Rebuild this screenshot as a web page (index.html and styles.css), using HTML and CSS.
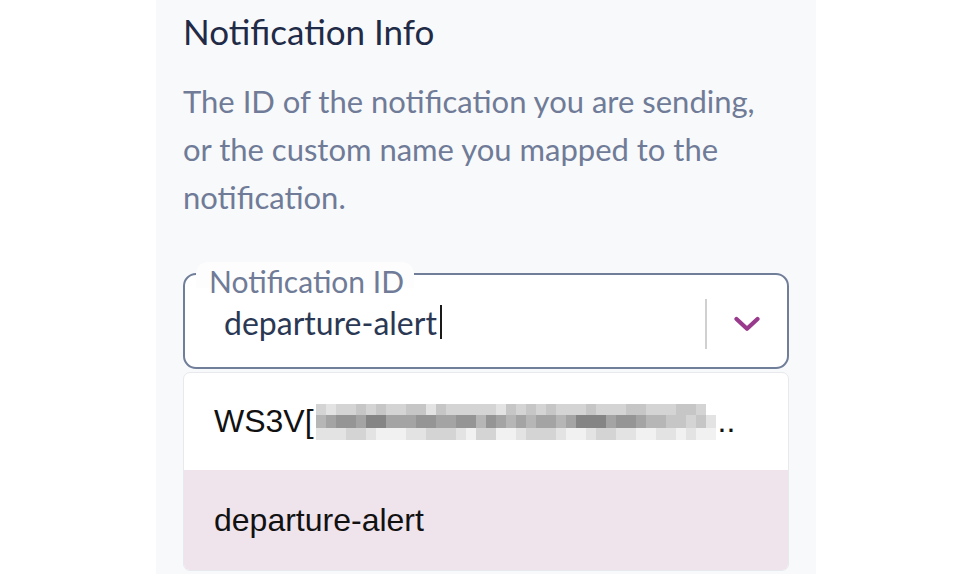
FILE: index.html
```html
<!DOCTYPE html>
<html lang="en">
<head>
<meta charset="utf-8">
<title>Notification Info</title>
<link rel="stylesheet" href="styles.css">
</head>
<body>
<div class="panel">
  <h2 class="title">Notification Info</h2>
  <p class="desc">The ID of the notification you are sending, or the custom name you mapped to the notification.</p>
  <div class="field">
    <span class="label">Notification ID</span>
    <div class="control">
      <div class="value">departure-alert<span class="caret"></span></div>
      <div class="sep"></div>
      <div class="chev">
        <svg width="26" height="16" viewBox="0 0 26 16"><polyline points="2.5,3 13,12.8 23.5,3" fill="none" stroke="#9a3a8c" stroke-width="4.2" stroke-linecap="round" stroke-linejoin="round"/></svg>
      </div>
    </div>
  </div>
  <div class="menu">
    <div class="item">
      <span>WS3V[</span>
      <span class="blur">
        <i class="s3"></i><i class="s2"></i><i class="s3"></i><i class="s3"></i><i class="s4"></i><i class="s3"></i><i class="s4"></i><i class="s3"></i><i class="s3"></i><i class="s4"></i><i class="s4"></i><i class="s2"></i><i class="s4"></i><i class="s3"></i><i class="s3"></i><i class="s3"></i><i class="s3"></i><i class="s3"></i><i class="s2"></i><i class="s4"></i><i class="s3"></i><i class="s4"></i><i class="s3"></i><i class="s4"></i><i class="s3"></i><i class="s3"></i><i class="s3"></i><i class="s4"></i><i class="s3"></i><i class="s3"></i><i class="s3"></i><i class="s4"></i><i class="s4"></i><i class="s3"></i><i class="s3"></i><i class="s3"></i><i class="s4"></i><i class="s4"></i><i class="s3"></i><i class="s0"></i>
        <i class="s5"></i><i class="s6"></i><i class="s7"></i><i class="s7"></i><i class="s6"></i><i class="s8"></i><i class="s8"></i><i class="s6"></i><i class="s6"></i><i class="s6"></i><i class="s7"></i><i class="s7"></i><i class="s6"></i><i class="s6"></i><i class="s7"></i><i class="s7"></i><i class="s5"></i><i class="s7"></i><i class="s6"></i><i class="s5"></i><i class="s6"></i><i class="s5"></i><i class="s6"></i><i class="s6"></i><i class="s5"></i><i class="s6"></i><i class="s8"></i><i class="s8"></i><i class="s8"></i><i class="s6"></i><i class="s7"></i><i class="s7"></i><i class="s6"></i><i class="s5"></i><i class="s5"></i><i class="s4"></i><i class="s4"></i><i class="s3"></i><i class="s4"></i><i class="s2"></i>
        <i class="s2"></i><i class="s2"></i><i class="s2"></i><i class="s3"></i><i class="s3"></i><i class="s2"></i><i class="s1"></i><i class="s1"></i><i class="s1"></i><i class="s2"></i><i class="s2"></i><i class="s3"></i><i class="s3"></i><i class="s3"></i><i class="s2"></i><i class="s1"></i><i class="s3"></i><i class="s3"></i><i class="s1"></i><i class="s1"></i><i class="s2"></i><i class="s3"></i><i class="s3"></i><i class="s3"></i><i class="s2"></i><i class="s1"></i><i class="s1"></i><i class="s2"></i><i class="s3"></i><i class="s3"></i><i class="s2"></i><i class="s2"></i><i class="s1"></i><i class="s1"></i><i class="s2"></i><i class="s2"></i><i class="s1"></i><i class="s2"></i><i class="s1"></i><i class="s1"></i>
      </span>
      <span class="dots">..</span>
    </div>
    <div class="item active">departure-alert</div>
  </div>
</div>
</body>
</html>
```
FILE: styles.css
```css
* { box-sizing: border-box; }
html, body { margin: 0; padding: 0; background: #ffffff; }
body { width: 974px; height: 583px; overflow: hidden; font-family: Lato, "Open Sans", sans-serif; }

.panel {
  margin-left: 156px;
  width: 660px;
  height: 574px;
  background: #f8f9fb;
  padding: 11px 27px 0 27px;
}

.title {
  margin: 0;
  font-size: 35px;
  font-weight: 400;
  line-height: 40px;
  color: #1f2b47;
}

.desc {
  margin: 26px 0 0 0;
  width: 585px;
  font-size: 31px;
  line-height: 48px;
  color: #6f7b97;
}

.field {
  position: relative;
  margin-top: 52px;
  height: 96px;
  border: 2px solid #717e9a;
  border-radius: 13px;
  background: #ffffff;
}

.label {
  position: absolute;
  top: -13px;
  left: 11px;
  padding: 0 10px 0 13px;
  height: 26px;
  line-height: 38px;
  background: #fdfdfe;
  border-radius: 12px 12px 0 0;
  font-size: 30px;
  color: #6f7b97;
  white-space: nowrap;
}

.control {
  display: flex;
  align-items: center;
  height: 100%;
  padding: 0 0 12px 39px;
}

.value {
  flex: 1;
  display: flex;
  align-items: center;
  font-size: 32px;
  color: #2b3854;
  padding-top: 14px;
}

.caret {
  display: inline-block;
  width: 2px;
  height: 34px;
  margin-left: 3px;
  background: #1a1a1a;
}

.sep {
  width: 2px;
  height: 50px;
  margin-top: 18px;
  background: #d0d0d0;
}

.chev {
  width: 80px;
  display: flex;
  justify-content: center;
  padding-top: 18px;
}
.chev svg { display: block; }

.menu {
  margin-top: 3px;
  border: 1px solid #e7e9ed;
  border-radius: 7px;
  background: #ffffff;
  overflow: hidden;
}

.item {
  height: 97px;
  display: flex;
  align-items: center;
  padding-left: 30px;
  font-family: "Liberation Sans", Arial, sans-serif;
  font-size: 32px;
  color: #111111;
}

.item.active {
  height: 100px;
  background: #efe3ec;
}

.blur {
  display: grid;
  grid-template-columns: repeat(40, 10px);
  grid-template-rows: 11px 13px 12px;
  margin-left: 2px;
}
.blur i { display: block; }
.dots { margin-left: 2px; }
.s0 { background: #ffffff; }
.s1 { background: #f1f1f1; }
.s2 { background: #e3e3e3; }
.s3 { background: #d4d4d4; }
.s4 { background: #c6c6c6; }
.s5 { background: #b6b6b6; }
.s6 { background: #a4a4a4; }
.s7 { background: #959595; }
.s8 { background: #858585; }
```
